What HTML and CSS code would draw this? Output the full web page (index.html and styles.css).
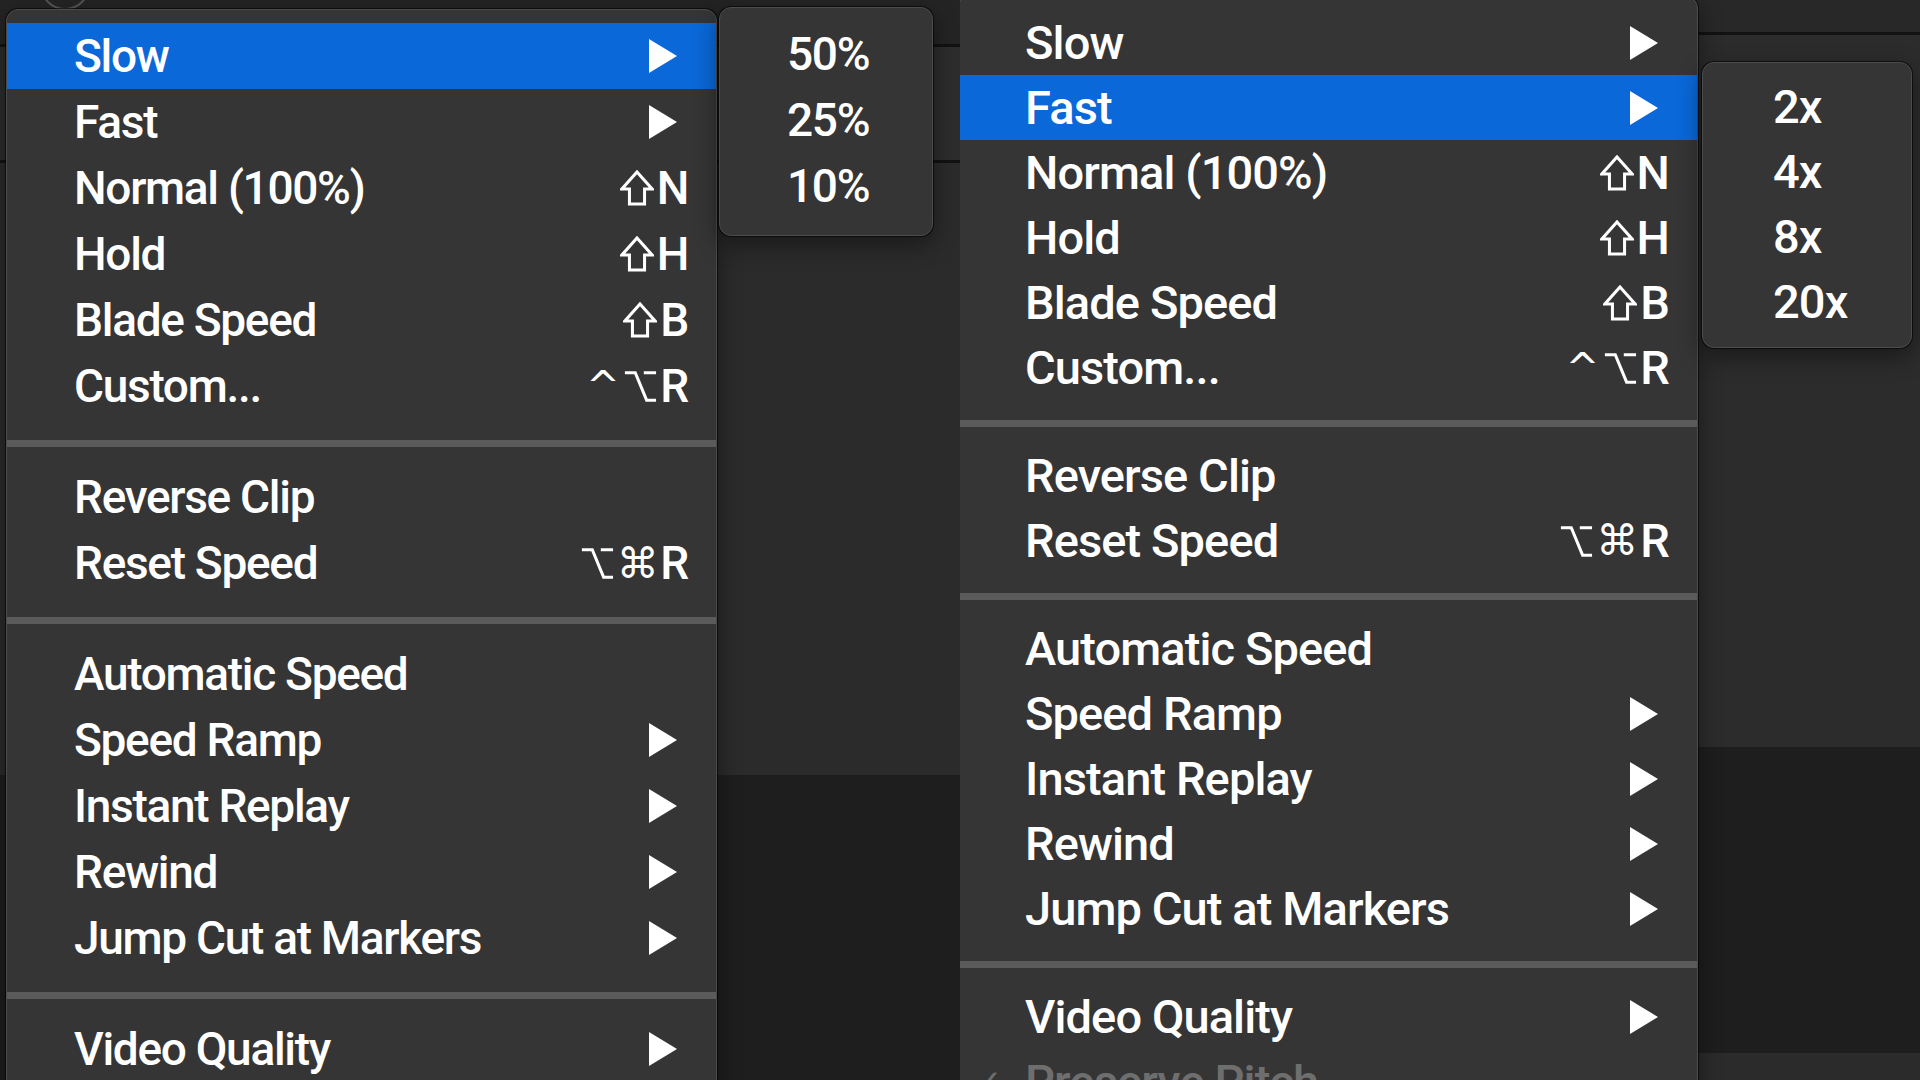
FILE: index.html
```html
<!DOCTYPE html>
<html lang="en">
<head>
    <meta charset="UTF-8">
    <title>Retime Menu</title>
    <link rel="stylesheet" href="styles.css">
</head>
<body>
    <!-- left capture: Slow submenu open -->
    <div class="panel panel-left">
        <div class="band band-top"></div>
        <div class="band band-line"></div>
        <div class="band band-toolbar"></div>
        <div class="band band-line"></div>
        <div class="band band-mid"></div>
        <div class="band band-dark"></div>

        <div class="circle-btn"></div>

        <div class="menu menu-a">
            <div class="item active"><span class="label">Slow</span><svg class="arrow" viewBox="0 0 30 36"><path d="M1 1 L29 18 L1 35 Z"/></svg></div>
            <div class="item"><span class="label">Fast</span><svg class="arrow" viewBox="0 0 30 36"><path d="M1 1 L29 18 L1 35 Z"/></svg></div>
            <div class="item"><span class="label">Normal (100%)</span><span class="keys"><svg class="key-ico" viewBox="0 0 36 38"><path d="M18 2 L34 20 H26 V36 H10 V20 H2 Z"/></svg>N</span></div>
            <div class="item"><span class="label">Hold</span><span class="keys"><svg class="key-ico" viewBox="0 0 36 38"><path d="M18 2 L34 20 H26 V36 H10 V20 H2 Z"/></svg>H</span></div>
            <div class="item"><span class="label">Blade Speed</span><span class="keys"><svg class="key-ico" viewBox="0 0 36 38"><path d="M18 2 L34 20 H26 V36 H10 V20 H2 Z"/></svg>B</span></div>
            <div class="item"><span class="label">Custom...</span><span class="keys"><span class="sym caret">^</span><svg class="key-ico" viewBox="0 0 36 38"><path d="M2 5 H13 L25 34 H35 M22 5 H35"/></svg>R</span></div>
            <div class="sep"></div>
            <div class="item"><span class="label">Reverse Clip</span></div>
            <div class="item"><span class="label">Reset Speed</span><span class="keys"><svg class="key-ico" viewBox="0 0 36 38"><path d="M2 5 H13 L25 34 H35 M22 5 H35"/></svg><span class="sym">⌘</span>R</span></div>
            <div class="sep"></div>
            <div class="item"><span class="label">Automatic Speed</span></div>
            <div class="item"><span class="label">Speed Ramp</span><svg class="arrow" viewBox="0 0 30 36"><path d="M1 1 L29 18 L1 35 Z"/></svg></div>
            <div class="item"><span class="label">Instant Replay</span><svg class="arrow" viewBox="0 0 30 36"><path d="M1 1 L29 18 L1 35 Z"/></svg></div>
            <div class="item"><span class="label">Rewind</span><svg class="arrow" viewBox="0 0 30 36"><path d="M1 1 L29 18 L1 35 Z"/></svg></div>
            <div class="item"><span class="label">Jump Cut at Markers</span><svg class="arrow" viewBox="0 0 30 36"><path d="M1 1 L29 18 L1 35 Z"/></svg></div>
            <div class="sep"></div>
            <div class="item"><span class="label">Video Quality</span><svg class="arrow" viewBox="0 0 30 36"><path d="M1 1 L29 18 L1 35 Z"/></svg></div>
            <div class="item checked disabled"><span class="check">✓</span><span class="label">Preserve Pitch</span></div>
        </div>

        <div class="submenu submenu-a">
            <div class="item"><span class="label">50%</span></div>
            <div class="item"><span class="label">25%</span></div>
            <div class="item"><span class="label">10%</span></div>
        </div>
    </div>

    <!-- right capture: Fast submenu open -->
    <div class="panel panel-right">
        <div class="band band-top-r"></div>
        <div class="band band-line"></div>
        <div class="band band-mid-r"></div>
        <div class="band band-dark-r"></div>
        <div class="band band-foot"></div>

        <div class="menu menu-b">
            <div class="item"><span class="label">Slow</span><svg class="arrow" viewBox="0 0 30 36"><path d="M1 1 L29 18 L1 35 Z"/></svg></div>
            <div class="item active"><span class="label">Fast</span><svg class="arrow" viewBox="0 0 30 36"><path d="M1 1 L29 18 L1 35 Z"/></svg></div>
            <div class="item"><span class="label">Normal (100%)</span><span class="keys"><svg class="key-ico" viewBox="0 0 36 38"><path d="M18 2 L34 20 H26 V36 H10 V20 H2 Z"/></svg>N</span></div>
            <div class="item"><span class="label">Hold</span><span class="keys"><svg class="key-ico" viewBox="0 0 36 38"><path d="M18 2 L34 20 H26 V36 H10 V20 H2 Z"/></svg>H</span></div>
            <div class="item"><span class="label">Blade Speed</span><span class="keys"><svg class="key-ico" viewBox="0 0 36 38"><path d="M18 2 L34 20 H26 V36 H10 V20 H2 Z"/></svg>B</span></div>
            <div class="item"><span class="label">Custom...</span><span class="keys"><span class="sym caret">^</span><svg class="key-ico" viewBox="0 0 36 38"><path d="M2 5 H13 L25 34 H35 M22 5 H35"/></svg>R</span></div>
            <div class="sep"></div>
            <div class="item"><span class="label">Reverse Clip</span></div>
            <div class="item"><span class="label">Reset Speed</span><span class="keys"><svg class="key-ico" viewBox="0 0 36 38"><path d="M2 5 H13 L25 34 H35 M22 5 H35"/></svg><span class="sym">⌘</span>R</span></div>
            <div class="sep"></div>
            <div class="item"><span class="label">Automatic Speed</span></div>
            <div class="item"><span class="label">Speed Ramp</span><svg class="arrow" viewBox="0 0 30 36"><path d="M1 1 L29 18 L1 35 Z"/></svg></div>
            <div class="item"><span class="label">Instant Replay</span><svg class="arrow" viewBox="0 0 30 36"><path d="M1 1 L29 18 L1 35 Z"/></svg></div>
            <div class="item"><span class="label">Rewind</span><svg class="arrow" viewBox="0 0 30 36"><path d="M1 1 L29 18 L1 35 Z"/></svg></div>
            <div class="item"><span class="label">Jump Cut at Markers</span><svg class="arrow" viewBox="0 0 30 36"><path d="M1 1 L29 18 L1 35 Z"/></svg></div>
            <div class="sep"></div>
            <div class="item"><span class="label">Video Quality</span><svg class="arrow" viewBox="0 0 30 36"><path d="M1 1 L29 18 L1 35 Z"/></svg></div>
            <div class="item checked disabled"><span class="check">✓</span><span class="label">Preserve Pitch</span></div>
        </div>

        <div class="submenu submenu-b">
            <div class="item"><span class="label">2x</span></div>
            <div class="item"><span class="label">4x</span></div>
            <div class="item"><span class="label">8x</span></div>
            <div class="item"><span class="label">20x</span></div>
        </div>
    </div>
</body>
</html>
```

FILE: styles.css
```css
/* dark macOS-style context menus, two captures side by side */
:root {
    --menu-bg: #353535;
    --menu-border: #4c4c4c;
    --highlight: #0a68d8;
    --sep: #5b5b5b;
}
* {
    box-sizing: border-box;
}
body {
    margin: 0;
    width: 1920px;
    height: 1080px;
    overflow: hidden;
    display: flex;
    background-color: #1e1e1e;
    font-family: Roboto, "Liberation Sans", sans-serif;
    color: #fff;
}

/* --- app backgrounds behind the menus --- */
.panel {
    position: relative;
    width: 960px;
    height: 1080px;
    overflow: hidden;
    display: flex;
    flex-direction: column;
}
.band { flex: none; }
.band-top { height: 44px; background-color: #242424; }
.band-line { height: 3px; background-color: #121212; }
.band-toolbar { height: 113px; background-color: #2d2d2d; }
.band-mid { height: 612px; background-color: #2b2b2b; }
.band-dark { flex: 1; background-color: #1e1e1e; }

.band-top-r { height: 32px; background-color: #282828; }
.band-mid-r { height: 712px; background-color: #2c2c2c; }
.band-dark-r { height: 306px; background-color: #1e1e1e; }
.band-foot { flex: 1; background-color: #2b2b2b; }

.circle-btn {
    position: absolute;
    left: 40px;
    top: -40px;
    width: 50px;
    height: 50px;
    border: 2px solid #555;
    border-radius: 50%;
}

/* --- menus --- */
.menu,
.submenu {
    position: absolute;
    background-color: var(--menu-bg);
    border: 1px solid var(--menu-border);
    border-radius: 12px;
    box-shadow: 0 0 0 1px rgba(0, 0, 0, 0.6), 0 8px 24px rgba(0, 0, 0, 0.45);
}
.menu-a {
    left: 6px;
    top: 9px;
    width: 711px;
    padding-top: 13px;
    --row: 66px;
}
.menu-b {
    left: -3px;
    top: -4px;
    width: 741px;
    padding-top: 13px;
    --row: 65px;
}
.submenu-a {
    left: 719px;
    top: 7px;
    width: 214px;
    padding: 13px 0 16px;
    --row: 66px;
}
.submenu-b {
    left: 742px;
    top: 62px;
    width: 210px;
    padding: 11px 0 13px;
    --row: 65px;
}

.item {
    display: flex;
    align-items: center;
    height: var(--row);
    padding: 0 28px 0 67px;
    font-size: 47px;
    font-weight: 500;
    letter-spacing: -0.9px;
    white-space: nowrap;
}
/* the left capture is squeezed a little narrower */
.menu-a .item,
.submenu-a .item {
    font-size: 46px;
    letter-spacing: -1.3px;
}
.submenu-b .item {
    padding-left: 70px;
}
.item.active {
    background-color: var(--highlight);
}
.item.disabled {
    color: #6e6e6e;
}
.item.checked {
    padding-left: 16px;
}
.check {
    width: 51px;
    font-family: "DejaVu Sans", sans-serif;
    font-size: 34px;
}
.label {
    flex: 1;
}
.arrow {
    width: 30px;
    height: 36px;
    margin-right: 10px;
    fill: #fff;
}
.keys {
    display: flex;
    align-items: center;
    gap: 3px;
}
.key-ico {
    width: 34px;
    height: 36px;
    fill: none;
    stroke: #fff;
    stroke-width: 3.2;
    stroke-linejoin: miter;
}
.sym {
    font-family: "DejaVu Sans", sans-serif;
    font-size: 42px;
    font-weight: 400;
}
.sym.caret {
    font-size: 40px;
    margin-right: 2px;
}
.sep {
    height: 7px;
    background-color: var(--sep);
    margin: 21px 0 17px;
}
.menu-b .sep {
    margin: 20px 0 16px;
}
```
